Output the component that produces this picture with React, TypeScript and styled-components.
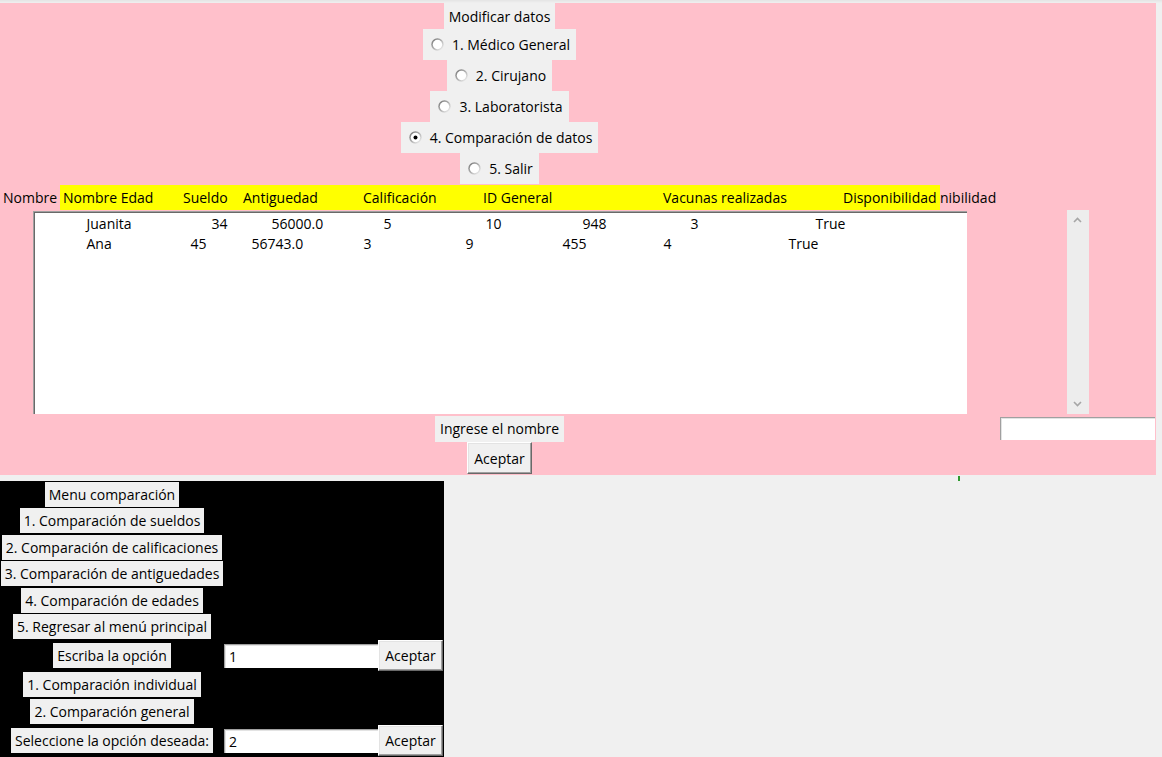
import styled, { createGlobalStyle } from 'styled-components';

const GlobalStyle = createGlobalStyle`
  html, body {
    margin: 0;
    padding: 0;
    background: #f0f0f0;
  }
  body {
    font-family: 'Open Sans', 'Noto Sans', sans-serif;
    font-size: 14px;
    color: #000;
  }
`;

const Page = styled.div`
  position: relative;
  width: 1162px;
  height: 757px;
  padding-top: 3px;
  box-sizing: border-box;
  background: linear-gradient(#e4e4e4, #f0f0f0 3px);
`;

const MainFrame = styled.div`
  display: grid;
  grid-template-columns: 999px 157px;
  grid-template-rows: 26px repeat(5, 31px) 27px 204px 27px 32px;
  width: 1156px;
  height: 472px;
  background: #ffc0cb;
`;

const Label = styled.div<{ $h?: number }>`
  grid-column: 1;
  justify-self: center;
  align-self: center;
  display: flex;
  align-items: center;
  height: ${({ $h }) => $h ?? 26}px;
  padding: 0 5px;
  background: #f0f0f0;
  white-space: nowrap;
`;

const RadioOption = styled.label`
  grid-column: 1;
  justify-self: center;
  display: flex;
  align-items: center;
  gap: 8px;
  height: 31px;
  padding: 0 6px 0 8px;
  background: #f0f0f0;
  white-space: nowrap;
`;

const HeaderRow = styled.div`
  grid-column: 1;
  display: flex;
  align-items: center;
  padding-left: 3px;
  white-space: nowrap;
`;

const PinkText = styled.span<{ $w: number }>`
  width: ${({ $w }) => $w}px;
  overflow: hidden;
`;

const YellowBar = styled.div`
  display: flex;
  align-items: center;
  width: 880px;
  height: 25px;
  background: #ffff00;
`;

const HeadCell = styled.span<{ $w: number }>`
  width: ${({ $w }) => $w}px;
  padding-left: 3px;
  box-sizing: border-box;
  white-space: nowrap;
`;

const ListBox = styled.div`
  grid-column: 1;
  justify-self: center;
  align-self: start;
  width: 934px;
  height: 203px;
  box-sizing: border-box;
  padding-top: 1px;
  background: #fff;
  border-top: 1px solid #a0a0a0;
  border-left: 1px solid #a0a0a0;
  box-shadow: inset 1px 1px #696969;
`;

const ListRow = styled.div`
  display: flex;
  align-items: center;
  height: 20px;
  padding-left: 53px;
  white-space: nowrap;
`;

const ListCell = styled.span<{ $w?: number }>`
  flex: none;
  width: ${({ $w }) => ($w ? `${$w}px` : 'auto')};
`;

const ScrollBar = styled.div`
  grid-column: 2;
  justify-self: center;
  display: flex;
  flex-direction: column;
  justify-content: space-between;
  align-items: center;
  width: 22px;
  height: 204px;
  margin-top: -1px;
  padding: 7px 0;
  box-sizing: border-box;
  background: #ededed;
`;

const Entry = styled.div<{ $w: number }>`
  display: flex;
  align-items: center;
  width: ${({ $w }) => $w}px;
  height: 24px;
  box-sizing: border-box;
  padding-left: 4px;
  background: #fff;
  border-top: 1px solid #a0a0a0;
  border-left: 1px solid #a0a0a0;
  box-shadow: inset 1px 1px #e3e3e3;
  align-self: center;
`;

const SideEntry = styled(Entry)`
  grid-column: 2;
  justify-self: center;
  height: 23px;
`;

const Button = styled.button`
  display: flex;
  align-items: center;
  justify-content: center;
  width: 65px;
  height: 31px;
  padding: 0;
  font: inherit;
  color: #000;
  background: #f0f0f0;
  border: 1px solid;
  border-color: #fff #696969 #696969 #fff;
  box-shadow: inset -1px -1px #a0a0a0, inset 1px 1px #e3e3e3;
`;

const MainButton = styled(Button)`
  grid-column: 1;
  justify-self: center;
  align-self: end;
  height: 32px;
`;

const CompareFrame = styled.div`
  display: grid;
  grid-template-columns: 224px 154px 66px;
  grid-template-rows: 26px 27px 26px 27px 26px 27px 31px 27px 27px 31px;
  width: 444px;
  height: 276px;
  margin-top: 6px;
  background: #000;
`;

const CompareLabel = styled(Label)`
  height: 25px;
  padding: 0 4px;
`;

const CompareEntry = styled(Entry)`
  grid-column: 2;
`;

const CompareButton = styled(Button)`
  grid-column: 3;
  align-self: center;
  justify-self: start;
`;

const GreenTick = styled.div`
  position: absolute;
  left: 958px;
  top: 476px;
  width: 2px;
  height: 5px;
  background: #2f9a2f;
`;

const RadioIcon = ({ checked, id }: { checked?: boolean; id: string }) => (
  <svg width="13" height="13" viewBox="0 0 13 13">
    <defs>
      <linearGradient id={id} x1="0" y1="0" x2="1" y2="1">
        <stop offset="0" stopColor="#6e6e6e" />
        <stop offset="0.55" stopColor="#b8b8b8" />
        <stop offset="1" stopColor="#ffffff" />
      </linearGradient>
    </defs>
    <circle cx="6.5" cy="6.5" r="6.2" fill={`url(#${id})`} />
    <circle cx="6.5" cy="6.5" r="4.7" fill="#fff" />
    {checked && <circle cx="6.5" cy="6.5" r="2" fill="#000" />}
  </svg>
);

const Chevron = ({ up }: { up?: boolean }) => (
  <svg width="9" height="6" viewBox="0 0 9 6">
    <path
      d={up ? 'M1 5 L4.5 1.5 L8 5' : 'M1 1 L4.5 4.5 L8 1'}
      fill="none"
      stroke="#a6a6a6"
      strokeWidth="1.6"
    />
  </svg>
);

const options = [
  '1. Médico General',
  '2. Cirujano',
  '3. Laboratorista',
  '4. Comparación de datos',
  '5. Salir',
];

const headers: [string, number][] = [
  ['Nombre Edad', 120],
  ['Sueldo', 60],
  ['Antiguedad', 120],
  ['Calificación', 120],
  ['ID General', 180],
  ['Vacunas realizadas', 180],
  ['Disponibilidad', 100],
];

// x offsets of each value inside the listbox, relative to its inner left edge
const rows: [string, number][][] = [
  [
    ['Juanita', 53],
    ['34', 178],
    ['56000.0', 238],
    ['5', 350],
    ['10', 452],
    ['948', 549],
    ['3', 657],
    ['True', 782],
  ],
  [
    ['Ana', 53],
    ['45', 157],
    ['56743.0', 218],
    ['3', 330],
    ['9', 432],
    ['455', 529],
    ['4', 630],
    ['True', 755],
  ],
];

const compareMenu = [
  'Menu comparación',
  '1. Comparación de sueldos',
  '2. Comparación de calificaciones',
  '3. Comparación de antiguedades',
  '4. Comparación de edades',
  '5. Regresar al menú principal',
];

const App: React.FC = () => {
  return (
    <>
      <GlobalStyle />
      <Page>
        <MainFrame>
          <Label>Modificar datos</Label>
          {options.map((opt, i) => (
            <RadioOption key={opt}>
              <RadioIcon id={`rg${i}`} checked={i === 3} />
              {opt}
            </RadioOption>
          ))}
          <HeaderRow>
            <PinkText $w={57}>Nombre</PinkText>
            <YellowBar>
              {headers.map(([h, w]) => (
                <HeadCell key={h} $w={w}>
                  {h}
                </HeadCell>
              ))}
            </YellowBar>
            <PinkText $w={58}>nibilidad</PinkText>
          </HeaderRow>
          <ListBox>
            {rows.map((row, r) => (
              <ListRow key={r}>
                {row.map(([text, x], c) => (
                  <ListCell key={c} $w={row[c + 1] ? row[c + 1][1] - x : undefined}>
                    {text}
                  </ListCell>
                ))}
              </ListRow>
            ))}
          </ListBox>
          <ScrollBar>
            <Chevron up />
            <Chevron />
          </ScrollBar>
          <Label $h={26}>Ingrese el nombre</Label>
          <SideEntry $w={155} />
          <MainButton>Aceptar</MainButton>
        </MainFrame>
        <GreenTick />
        <CompareFrame>
          {compareMenu.map((m) => (
            <CompareLabel key={m}>{m}</CompareLabel>
          ))}
          <CompareLabel>Escriba la opción</CompareLabel>
          <CompareEntry $w={154}>1</CompareEntry>
          <CompareButton>Aceptar</CompareButton>
          <CompareLabel>1. Comparación individual</CompareLabel>
          <CompareLabel>2. Comparación general</CompareLabel>
          <CompareLabel>Seleccione la opción deseada:</CompareLabel>
          <CompareEntry $w={154}>2</CompareEntry>
          <CompareButton>Aceptar</CompareButton>
        </CompareFrame>
      </Page>
    </>
  );
};

export default App;
